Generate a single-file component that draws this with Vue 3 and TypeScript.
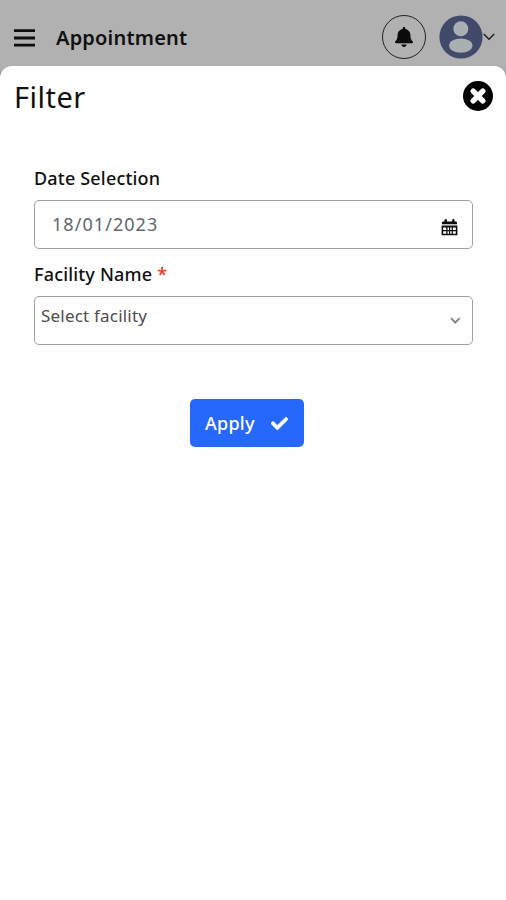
<script setup lang="ts">
import { ref } from 'vue'

const title = ref('Appointment')
const date = ref('18/01/2023')
const placeholder = ref('Select facility')
</script>

<template>
  <div class="screen">
    <header class="topbar">
      <svg class="menu" width="21" height="18" viewBox="0 0 21 18">
        <path d="M0 1.700h21M0 9h21M0 16.100h21" stroke="#0d0d0d" stroke-width="2.800" />
      </svg>
      <h1 class="page-title">{{ title }}</h1>
      <div class="bell">
        <svg width="18" height="20" viewBox="0 0 448 512" preserveAspectRatio="none">
          <path fill="#0a0b0c" d="M224 512c35.32 0 63.97-28.65 63.97-64H160.03c0 35.35 28.65 64 63.97 64zm215.39-149.71c-19.32-20.76-55.47-51.99-55.47-154.29 0-77.7-54.48-139.9-127.94-155.16V32c0-17.67-14.32-32-31.98-32s-31.98 14.33-31.98 32v20.84C118.56 68.1 64.08 130.3 64.08 208c0 102.3-36.15 133.53-55.47 154.29-6 6.45-8.66 14.16-8.61 21.71.11 16.4 12.98 32 32.1 32h383.8c19.12 0 32-15.6 32.1-32 .05-7.55-2.61-15.27-8.61-21.71z" />
        </svg>
      </div>
      <svg class="avatar" width="44" height="44" viewBox="0 0 44 44">
        <circle cx="22" cy="22" r="21.6" fill="#424a6b" />
        <circle cx="21.8" cy="13.8" r="7.5" fill="#a9b0b1" />
        <ellipse cx="21.8" cy="30.6" rx="11.7" ry="7.2" fill="#a9b0b1" />
      </svg>
      <svg class="caret" width="12" height="8" viewBox="0 0 12 8">
        <path d="M.8 1l5.2 5.2L11.2 1" fill="none" stroke="#222" stroke-width="1.5" />
      </svg>
    </header>

    <main class="sheet">
      <div class="sheet-head">
        <h2 class="sheet-title">Filter</h2>
        <svg class="close" width="30" height="30" viewBox="0 0 30 30">
          <circle cx="15" cy="15" r="15" fill="#000" />
          <path d="M10.200 10.200l9.600 9.600M19.800 10.200l-9.600 9.600" stroke="#fff" stroke-width="5.400" stroke-linecap="round" />
        </svg>
      </div>

      <form class="form" @submit.prevent>
        <div class="label"><span class="label-date">Date Selection</span></div>
        <div class="field date-field">
          <span class="date">{{ date }}</span>
          <svg width="17" height="17" viewBox="0 0 17 17">
            <path fill="#0b0b0b" fill-rule="evenodd" d="M3.500 1.300a1.200 1.200 0 0 1 2.400 0V2.400h5.200V1.300a1.200 1.200 0 0 1 2.400 0V2.400h1.300q1.200 0 1.200 1.200V5.200H1V3.600Q1 2.400 2.200 2.400H3.500zM.6 6.500h15.800v9.800H.6zM2.200 8.400v2.600h3V8.400zm4.300 0v2.600h1.500V8.400zm2.700 0v2.600h1.500V8.400zm2.700 0v2.600h2.900V8.400zM2.200 12.200v2.500h3V12.200zm4.300 0v2.500h1.500V12.200zm2.700 0v2.500h1.500V12.200zm2.700 0v2.500h2.900V12.200z" />
          </svg>
        </div>
        <div class="label second"><span class="label-facility">Facility Name</span><span class="star">*</span></div>
        <div class="field select-field">
          <span class="placeholder">{{ placeholder }}</span>
          <svg width="11" height="8" viewBox="0 0 11 8">
            <path d="M1 1.200l4.300 4.500L9.600 1.200" fill="none" stroke="#858585" stroke-width="1.900" />
          </svg>
        </div>
        <button class="apply" type="submit">
          <span>Apply</span>
          <svg width="17" height="17" viewBox="0 0 512 512">
            <path fill="#fff" stroke="#fff" stroke-width="16" d="M173.898 439.404l-166.4-166.4c-9.997-9.997-9.997-26.206 0-36.204l36.203-36.204c9.997-9.998 26.207-9.998 36.204 0L192 312.690 432.095 72.596c9.997-9.997 26.207-9.997 36.204 0l36.203 36.204c9.997 9.997 9.997 26.206 0 36.204l-294.400 294.401c-9.998 9.997-26.207 9.997-36.204-.001z" />
          </svg>
        </button>
      </form>
    </main>
  </div>
</template>

<style>
body {
  margin: 0;
}
</style>

<style scoped>
.screen {
  display: flex;
  flex-direction: column;
  height: 900px;
  overflow: hidden;
  background: linear-gradient(#b1b1b1 0 69px, #8580b5 75px, #b1b1b1 84px);
  font-family: "Noto Sans", sans-serif;
  color: #111;
}
.topbar {
  display: flex;
  align-items: center;
  flex: none;
  box-sizing: border-box;
  height: 66px;
  padding: 8px 11px 0 14px;
}
.topbar svg {
  flex: none;
}
.topbar .menu {
  margin-top: 2px;
}
.page-title {
  margin: 0 auto 0 21px;
  padding-top: 1px;
  font-size: 20px;
  line-height: 28px;
  font-weight: 600;
  letter-spacing: 0.2px;
}
.bell {
  display: flex;
  align-items: center;
  justify-content: center;
  box-sizing: border-box;
  width: 44px;
  height: 44px;
  margin-right: 13px;
  border: 1px solid #222;
  border-radius: 50%;
}
.sheet {
  flex: 1;
  box-sizing: border-box;
  border-radius: 12px 12px 0 0;
  background: #fefefe;
}
.sheet-head {
  display: flex;
  align-items: center;
  justify-content: space-between;
  height: 60px;
  padding: 0 13px 0 14px;
}
.sheet-title {
  margin: 0;
  padding-top: 1px;
  font-size: 29px;
  line-height: 40px;
  font-weight: 450;
  letter-spacing: 0.5px;
}
.form {
  display: flex;
  flex-direction: column;
  padding: 39px 33px 0 34px;
}
.label {
  display: flex;
  height: 26px;
  line-height: 26px;
  font-size: 18px;
  font-weight: 500;
  letter-spacing: 0.18px;
}
.second {
  margin-top: 12px;
}
.star {
  margin-left: 5px;
  color: #f32d1c;
}
.field {
  display: flex;
  box-sizing: border-box;
  justify-content: space-between;
  height: 49px;
  margin-top: 9px;
  border: 1px solid #a0a0a0;
  border-radius: 5px;
}
.date-field {
  padding: 9px 14px 0 17px;
}
.date-field svg {
  margin-top: 9px;
}
.date {
  font-size: 18px;
  line-height: 28px;
  letter-spacing: 1.05px;
  color: #61666b;
}
.select-field {
  padding: 6px 11px 0 6px;
}
.select-field svg {
  margin-top: 14px;
}
.placeholder {
  font-size: 17px;
  line-height: 26px;
  letter-spacing: 0.2px;
  color: #4d4d4d;
}
.apply {
  display: flex;
  align-items: center;
  justify-content: space-between;
  box-sizing: border-box;
  width: 114px;
  height: 48px;
  margin: 54px 0 0 156px;
  padding: 0 16px 0 15px;
  border: 0;
  border-radius: 5px;
  background: #2668fb;
  color: #fff;
  font: 500 18px/28px "Noto Sans", sans-serif;
  letter-spacing: 0.25px;
}
</style>
